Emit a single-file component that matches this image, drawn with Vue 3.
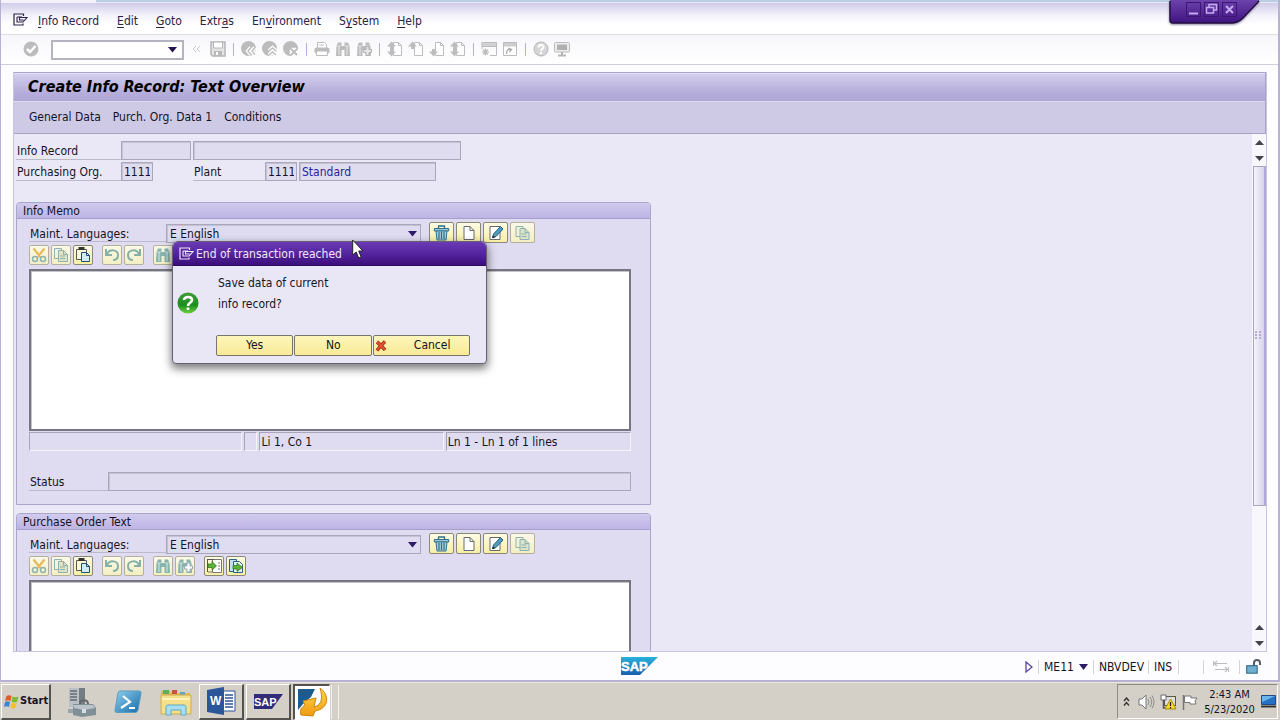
<script setup>
import { ref } from 'vue'

const menus = [
  ['', 'I', 'nfo Record'],
  ['', 'E', 'dit'],
  ['', 'G', 'oto'],
  ['Extr', 'a', 's'],
  ['En', 'v', 'ironment'],
  ['S', 'y', 'stem'],
  ['', 'H', 'elp']
]

const page = '<path d="M6.500 1.500h5l3 3v10h-8z" fill="#fff" stroke="#bdbdbd"/><path d="M11.500 1.500v3h3" fill="none" stroke="#bdbdbd"/>'
const up = '<path d="M4.500 .5 9 5.500H6V8H3V5.500H0z" fill="#bdbdbd"/>'
const down = '<path d="M4.500 15.500 0 10.500h3V8h3v2.500h3z" fill="#bdbdbd"/>'
const disc = '<circle cx="7.500" cy="7.500" r="7.500" fill="#bcbcbc"/>'
const bino = (c) => `<path d="M1.500 5 3 1.500h3.500V5h3V1.500H13L14.500 5l.5 10H9.500V9h-3v6H1z" fill="${c}"/><path d="M4 5v9M12 5v9" stroke="#fff" stroke-opacity=".7"/><path d="M2 5h4M10 5h4" stroke="#fff" stroke-opacity=".5"/>`

const toolGroups = [
  [
    { label: 'Back', art: disc + '<path d="M10 6.500 7 10l3 3.500M14 6.500 11 10l3 3.500" fill="none" stroke="#fff" stroke-width="4"/><path d="M10 6.500 7 10l3 3.500M14 6.500 11 10l3 3.500" fill="none" stroke="#bcbcbc" stroke-width="1.400"/>' },
    { label: 'Exit', art: disc + '<path d="m7 10 3.500-3 3.500 3M7 14l3.500-3 3.500 3" fill="none" stroke="#fff" stroke-width="4"/><path d="m7 10 3.500-3 3.500 3M7 14l3.500-3 3.500 3" fill="none" stroke="#bcbcbc" stroke-width="1.400"/>' },
    { label: 'Cancel', art: disc + '<path d="m8 8 6 6M14 8l-6 6" stroke="#fff" stroke-width="5"/><path d="m8 8 6 6M14 8l-6 6" stroke="#bcbcbc" stroke-width="2"/>' }
  ],
  [
    { label: 'Print', art: '<path d="M3.500 7V1.500h7l2 2V7" fill="#fff" stroke="#bcbcbc"/><path d="M5 4h5" stroke="#bcbcbc"/><rect x=".5" y="6.500" width="15" height="6" rx="2" fill="#bcbcbc"/><path d="M2.500 10h11v4.500h-11z" fill="#fff" stroke="#bcbcbc"/>' },
    { label: 'Find', art: bino('#bcbcbc') },
    { label: 'Find next', art: bino('#bcbcbc') + '<path d="M10 5.500h3v3h2.500v3H13v3h-3v-3H7.500v-3H10z" fill="#e6e6e6" stroke="#b0b0b0"/>' }
  ],
  [
    { label: 'First page', art: page + up + down },
    { label: 'Previous page', art: page + up },
    { label: 'Next page', art: page + down },
    { label: 'Last page', art: page + up + down }
  ],
  [
    { label: 'New session', art: '<rect x="1" y="1.500" width="14.500" height="4" fill="#d2d2d2" stroke="#bcbcbc"/><path d="M15.500 5.500v9H9M1 5.500V8" fill="none" stroke="#bcbcbc"/><path d="M4.500 7.500v7M1 11h7M2 8.500l5 5M7 8.500l-5 5" stroke="#bcbcbc" stroke-width="1.200"/>' },
    { label: 'Create shortcut', art: '<path d="M1.500 1.500h13v13h-13z" fill="#fff" stroke="#bcbcbc"/><path d="M2 2h12v3.500H2z" fill="#cdcdcd"/><path d="M4.500 13c0-3 1-5 4-4.500M6.500 7l3 1.500-2 2.500" fill="none" stroke="#aaa" stroke-width="1.300"/>' }
  ],
  [
    { label: 'Help', art: '<circle cx="8" cy="8" r="7" fill="#d6d6d6" stroke="#b5b5b5"/><path d="M5.500 6.500C5.500 3 10.500 3.500 10.500 6c0 2-2.500 1.800-2.500 4M8 11v2" fill="none" stroke="#fff" stroke-width="2"/>' },
    { label: 'Customize layout', art: '<rect x=".5" y="1.500" width="15" height="9.500" rx="1" fill="#ededed" stroke="#bcbcbc"/><path d="M3 3.500h10v5.500H3z" fill="#b0b0b0"/><path d="M8 11v3M4 14.500h8" stroke="#b5b5b5" stroke-width="2"/>' }
  ]
]

const sheet = '<path d="M3.500 1.500h6l4 4v9h-10z" fill="#fff" stroke="#666a70"/><path d="M9.500 1.500v4h4" fill="none" stroke="#666a70"/>'
const copyArt = '<path d="M1.500 1.500h7v10h-7z" fill="#f5f3d6" stroke="#8fb0b0"/><path d="M5.500 3.500h5l4 4v7h-9z" fill="#d9e4c8" stroke="#8fb0b0"/><path d="M10.500 3.500v4h4M7 9h5M7 11.500h5" fill="none" stroke="#8fb0b0"/>'
const languageTools = [
  { label: 'Delete', art: '<path d="M5 3.500V1h6v2.500" fill="none" stroke="#2e6f8c" stroke-width="1.300"/><path d="M.8 3.500h14.400v2.500H.8z" fill="#9ccada" stroke="#2e6f8c"/><path d="M2.500 6h11l-1 9h-9z" fill="#a5d0dd" stroke="#2e6f8c"/><path d="M5.500 7v7M8 7v7M10.500 7v7" stroke="#2e6f8c" stroke-width="1.200"/>' },
  { label: 'Create', art: sheet },
  { label: 'Change', art: '<path d="M2.500 1.500h10v13h-10z" fill="#fff" stroke="#666a70"/><path d="M5 12.500l1-3.500 7-7.500 2.500 2.500-7 7.500z" fill="#4f9cc0" stroke="#235c78"/><path d="m5 12.500 2-.7" stroke="#222" stroke-width="1.500"/>' },
  { label: 'Copy', art: copyArt, off: true }
]
const editorTools = [
  [
    { label: 'Cut', off: true, art: '<path d="M2.500 1.500 9.500 10M13.500 1.500 6.500 10" stroke="#e8b85a" stroke-width="2.200"/><circle cx="4" cy="12" r="2.500" fill="none" stroke="#8fb3b0" stroke-width="1.500"/><circle cx="12" cy="12" r="2.500" fill="none" stroke="#8fb3b0" stroke-width="1.500"/>' },
    { label: 'Copy', off: true, art: copyArt },
    { label: 'Paste', art: '<path d="M1.500 2.500h10v10h-10z" fill="#f8f6df" stroke="#5a5a4c"/><path d="M3.500 0h6v3h-6z" fill="#333"/><path d="M6.500 5.500h5l3 3v6h-8z" fill="#d4ecf5" stroke="#205070"/><path d="M11.500 5.500v3h3" fill="none" stroke="#205070"/>' }
  ],
  [
    { label: 'Undo', off: true, art: '<path d="M2 2v6h6M3 7c3-6 11-4 11 1 0 3-2 5-5 5" fill="none" stroke="#87b0a9" stroke-width="2"/>' },
    { label: 'Redo', off: true, art: '<path d="M14 2v6H8M13 7C10 1 2 3 2 8c0 3 2 5 5 5" fill="none" stroke="#87b0a9" stroke-width="2"/>' }
  ],
  [
    { label: 'Find', off: true, art: bino('#86b4ae') },
    { label: 'Find next', off: true, art: bino('#86b4ae') + '<path d="M10 5h3v3h2.500v3H13v3h-3v-3H7.500V8H10z" fill="#fff" stroke="#9ab"/>' }
  ],
  [
    { label: 'Load text', art: '<path d="M6.500 1.500h9v13h-9z" fill="#fff" stroke="#777"/><path d="M1 1.500h7M1.500 1v13" stroke="#555"/><path d="M2 6h4V3.500L10.500 8 6 12v-2.500H2z" fill="#5bb437" stroke="#2c6f1d" stroke-width=".7"/><path d="M12 5h2M12 8h2M12 11h2M2 14h4" stroke="#777"/>' },
    { label: 'Save text', art: '<path d="M1.500 1.500h7v12h-7z" fill="#c3e2ee" stroke="#2a617e"/><path d="M5.500 3.500h6l3 3v8h-9z" fill="#e5f4fa" stroke="#2a617e"/><path d="M5 7.500h4V5l5.500 4.500L9 13.500V11H5z" fill="#5bb437" stroke="#2c6f1d" stroke-width=".7"/>' }
  ]
]

const command = ref('')
const groups = [
  { id: 'memo', title: 'Info Memo', status: true },
  { id: 'po', title: 'Purchase Order Text', status: false }
]
const exitArt = '<path d="M10.500 3V1H1v11h9v-1.500" fill="none" stroke="currentColor" stroke-width="1.200"/><path d="M4 4h5M4 4v5h6l4-4.500H6.500V7h4" fill="none" stroke="currentColor" stroke-width="1.100"/>'
</script>

<template>
  <div class="screen">
    <div class="window">
      <div class="edge"><span></span></div>
      <svg class="controls" width="92" height="26" viewBox="0 0 92 26" aria-hidden="true">
        <defs>
          <linearGradient id="purple" x1="0" y1="0" x2="0" y2="1">
            <stop offset="0" stop-color="#6c42ad" /><stop offset="1" stop-color="#401480" />
          </linearGradient>
        </defs>
        <path d="M1 0v20q0 3 3 3h58q7 0 12-5L90 1V0z" fill="url(#purple)" />
        <path d="M1 1v19q0 3 3 3h58q7 0 12-5L90 1" fill="none" stroke="#241040" stroke-width="1.500" />
        <g fill="none" stroke="#3d1673">
          <rect x="17.500" y="2.500" width="14" height="14" /><rect x="35.500" y="2.500" width="14" height="14" /><rect x="53.500" y="2.500" width="14" height="14" />
        </g>
        <g fill="none" stroke="#c5a9ef" stroke-width="1.500">
          <path d="M20 13.500h9" stroke-width="2" /><path d="M40 7V4.500h7.500V10H45" /><path d="M37.500 7.500h7v5.500h-7z" /><path d="m57 6 7 7M64 6l-7 7" stroke-width="2" />
        </g>
      </svg>

      <nav class="menubar">
        <button class="plain session" aria-label="Session menu"><svg width="15" height="13" viewBox="0 0 15 13" v-html="exitArt"></svg></button>
        <button v-for="m in menus" :key="m.join('')" class="plain">{{ m[0] }}<u>{{ m[1] }}</u>{{ m[2] }}</button>
      </nav>

      <div class="toolbar">
        <button class="plain enter" aria-label="Enter">
          <svg width="16" height="16" viewBox="0 0 16 16"><circle cx="8" cy="8" r="7.500" fill="#bcbcbc" /><path d="m4 8 3 3 5.500-6" fill="none" stroke="#fff" stroke-width="2.500" /></svg>
        </button>
        <div class="command">
          <input v-model="command" type="text" aria-label="Command field">
          <svg width="9" height="6" viewBox="0 0 9 6"><path d="M0 0h9L4.500 5.500z" fill="#24144f" /></svg>
        </div>
        <button class="plain collapse" aria-label="Hide command field">
          <svg width="9" height="8" viewBox="0 0 9 8"><path d="M4 1 1 4l3 3M8 1 5 4l3 3" fill="none" stroke="#c9c9c9" /></svg>
        </button>
        <button class="plain" aria-label="Save">
          <svg width="16" height="16" viewBox="0 0 16 16"><path d="M1 1h14v14H2.500L1 13.500z" fill="#e4e4e4" stroke="#b5b5b5" stroke-width="1.500" /><path d="M3.500 1h9v6h-9z" fill="#fff" stroke="#b5b5b5" /><path d="M4 10h8v5H4z" fill="#b9b9b9" /><path d="M6 11h2v3H6z" fill="#fff" /></svg>
        </button>
        <div v-for="(g, i) in toolGroups" :key="i" class="tools">
          <button v-for="t in g" :key="t.label" class="plain" :aria-label="t.label"><svg width="16" height="16" viewBox="0 0 16 16" v-html="t.art"></svg></button>
        </div>
      </div>

      <main class="content">
        <header class="heading">
          <h1>Create Info Record: Text Overview</h1>
          <div class="actions">
            <button class="plain">General Data</button>
            <button class="plain">Purch. Org. Data 1</button>
            <button class="plain">Conditions</button>
          </div>
        </header>

        <div class="body">
          <div class="form">
            <div class="row">
              <label class="lab main-lab" for="rec">Info Record</label>
              <input id="rec" class="field w70" readonly>
              <input class="field w268" readonly aria-label="Info record description">
            </div>
            <div class="row">
              <label class="lab main-lab" for="org">Purchasing Org.</label>
              <input id="org" class="field w32" readonly value="1111">
              <label class="lab plant" for="plant">Plant</label>
              <input id="plant" class="field w32" readonly value="1111">
              <input class="field w137" readonly value="Standard" aria-label="Info category">
            </div>

            <section v-for="g in groups" :key="g.id" class="group">
              <h2>{{ g.title }}</h2>
              <div class="inner">
                <div class="langrow">
                  <label class="lab lang-lab" :for="g.id + '-lang'">Maint. Languages:</label>
                  <div class="select">
                    <select :id="g.id + '-lang'"><option>E English</option></select>
                    <svg width="9" height="6" viewBox="0 0 9 6"><path d="M0 0h9L4.500 5.500z" fill="#2c1a66" /></svg>
                  </div>
                  <div class="langtools">
                    <button v-for="t in languageTools" :key="t.label" class="key wide" :class="{ off: t.off }" :aria-label="t.label"><svg width="17" height="16" viewBox="0 0 16 16" v-html="t.art"></svg></button>
                  </div>
                </div>
                <div class="editbar">
                  <div v-for="(set, i) in editorTools" :key="i" class="set">
                    <button v-for="t in set" :key="t.label" class="key" :class="{ off: t.off }" :aria-label="t.label"><svg width="16" height="16" viewBox="0 0 16 16" v-html="t.art"></svg></button>
                  </div>
                </div>
                <textarea class="editor" :aria-label="g.title"></textarea>
                <template v-if="g.status">
                  <div class="info">
                    <span class="c1"></span><span class="c2"></span><span class="c3">Li 1, Co 1</span><span class="c4">Ln 1 - Ln 1 of 1 lines</span>
                  </div>
                  <div class="statusrow">
                    <label class="lab status-lab" :for="g.id + '-status'">Status</label>
                    <input :id="g.id + '-status'" class="field grow" readonly>
                  </div>
                </template>
              </div>
            </section>
          </div>

          <div class="scroll">
            <button class="plain arrow" aria-label="Scroll up"><svg width="9" height="5" viewBox="0 0 9 5"><path d="M0 5h9L4.500 0z" fill="#45414f" /></svg></button>
            <button class="plain arrow" aria-label="Scroll down"><svg width="9" height="5" viewBox="0 0 9 5"><path d="M0 0h9L4.500 5z" fill="#45414f" /></svg></button>
            <div class="track"><div class="thumb"><svg width="8" height="9" viewBox="0 0 8 9"><path d="M0 0h2v2H0zM4 0h2v2H4zM0 3h2v2H0zM4 3h2v2H4zM0 6h2v2H0zM4 6h2v2H4z" fill="#b4acd2" /></svg></div></div>
            <button class="plain arrow" aria-label="Scroll up"><svg width="9" height="5" viewBox="0 0 9 5"><path d="M0 5h9L4.500 0z" fill="#45414f" /></svg></button>
            <button class="plain arrow" aria-label="Scroll down"><svg width="9" height="5" viewBox="0 0 9 5"><path d="M0 0h9L4.500 5z" fill="#45414f" /></svg></button>
          </div>
        </div>
      </main>

      <footer class="statusbar">
        <svg class="brand" width="37" height="18" viewBox="0 0 37 18" role="img" aria-label="SAP">
          <defs><linearGradient id="sapblue" x1="0" y1="0" x2="0" y2="1"><stop offset="0" stop-color="#28b1dc" /><stop offset="1" stop-color="#1a5fb0" /></linearGradient></defs>
          <path d="M0 0h37L19 18H0z" fill="url(#sapblue)" /><text x="0" y="14" font-family="Liberation Sans, sans-serif" font-size="13" font-weight="700" fill="#fff" stroke="#fff" stroke-width=".5">SAP</text>
        </svg>
        <div class="cells">
          <button class="plain play" aria-label="Expand"><svg width="8" height="12" viewBox="0 0 8 12"><path d="M1 1v10l6-5z" fill="#fff" stroke="#5a45a5" stroke-width="1.300" /></svg></button>
          <button class="plain cell tcode">ME11<svg width="9" height="6" viewBox="0 0 9 6"><path d="M0 0h9L4.500 6z" fill="#2c1a66" /></svg></button>
          <span class="cell sys">NBVDEV</span>
          <span class="cell ins">INS</span>
          <span class="cell blank"></span>
          <span class="cell flow"><svg width="16" height="13" viewBox="0 0 16 13"><path d="M.5 1v5M1 3.500h13M4 1 1.500 3.500 4 6M15.500 7v5M15 9.500H2M12 7l2.500 2.500L12 12" fill="none" stroke="#bdbdbd" stroke-width="1.200" /></svg></span>
          <span class="cell lock"><svg width="15" height="15" viewBox="0 0 15 15"><path d="M8 7V4c0-4 6-4 6 0v2" fill="none" stroke="#555d66" stroke-width="2" /><rect x=".7" y="6.700" width="10.500" height="7.500" fill="#6fb0d0" stroke="#2d607c" /></svg></span>
        </div>
      </footer>

      <div class="dialog" role="dialog" aria-labelledby="dlg-title">
        <div class="dlg-title"><svg width="15" height="13" viewBox="0 0 15 13" v-html="exitArt"></svg><span id="dlg-title">End of transaction reached</span></div>
        <div class="dlg-body">
          <svg width="22" height="22" viewBox="0 0 22 22" aria-hidden="true">
            <defs><linearGradient id="green" x1="0" y1="0" x2="0" y2="1"><stop offset="0" stop-color="#3f9c3a" /><stop offset=".6" stop-color="#1c8f20" /><stop offset="1" stop-color="#6fd044" /></linearGradient></defs>
            <circle cx="11" cy="11" r="10.500" fill="url(#green)" /><path d="M7 8c0-4 8-4 8 0 0 3-4 2.500-4 6M11 15.500V18" fill="none" stroke="#fff" stroke-width="2.600" />
          </svg>
          <p>Save data of current<br>info record?</p>
        </div>
        <div class="dlg-buttons">
          <button class="yellow">Yes</button><button class="yellow no">No</button>
          <button class="yellow cancel"><svg width="12" height="12" viewBox="0 0 12 12"><path d="M2 2q4 3 8 8M10 1.500Q6 5 2 10.500" fill="none" stroke="#8f2418" stroke-width="3.600" /><path d="M2 2q4 3 8 8M10 1.500Q6 5 2 10.500" fill="none" stroke="#e0512f" stroke-width="2.200" /></svg><span>Cancel</span></button>
        </div>
      </div>
    </div>

    <div class="taskbar">
      <button class="start">
        <svg width="15" height="15" viewBox="0 0 15 15"><path d="M2.500 2Q5 .5 7.500 2L6.500 7Q4 5.500 1 7z" fill="#e8562a" /><path d="M8.500 2.500q3 1.500 6 0L13 8q-3 1-5.500-.5z" fill="#7fb93a" /><path d="M1 8q2.500-1.500 5 0l-1 5Q2.500 11.500 0 13z" fill="#3f83d4" /><path d="M7.500 8.500q3 1.500 5.500.5l-1.500 5q-2.500 1-5-.5z" fill="#f6c02c" /></svg>Start
      </button>
      <div class="pins">
        <button class="plain pin" aria-label="Server Manager"><svg width="28" height="30" viewBox="0 0 28 30"><path d="M1 1h10v19H1z" fill="#b9c1c4" /><path d="M2 4h7M2 7h7M2 10h7M2 13h7" stroke="#626b70" stroke-width="1.500" /><path d="M11 1h6v19h-6z" fill="#737d83" /><path d="M5 17h20l3 4v7l-14 2-9-2z" fill="#818f97" /><path d="M5 18h20l2 3-11 2-10-2z" fill="#bac4ca" /><path d="M12 17c0-5 8-5 8 0" fill="none" stroke="#5e686d" stroke-width="2" /><path d="M14 22h4v4h-4z" fill="#d7dee1" /><path d="M0 22h5v4H0z" fill="#9aa5aa" /></svg></button>
        <button class="plain pin" aria-label="PowerShell"><svg width="28" height="24" viewBox="0 0 28 24"><defs><linearGradient id="ps" x1="0" y1="0" x2="1" y2="1"><stop offset="0" stop-color="#8bd0ee" /><stop offset="1" stop-color="#1769a8" /></linearGradient></defs><path d="M6 1h19q2.500 0 2 2.500L24 20q-.5 2.500-3 2.500H3Q.5 22.500 1 20L4 3q.5-2 2-2z" fill="url(#ps)" stroke="#5a9dc2" /><path d="m9 6 7 6-9 6M15 18h6" fill="none" stroke="#fff" stroke-width="2.200" /></svg></button>
        <button class="plain pin" aria-label="Explorer"><svg width="32" height="28" viewBox="0 0 32 28"><path d="M1 3h9l2 2h18v21H1z" fill="#ddb853" /><path d="M3 2h6v4H3z" fill="#5fae62" /><path d="M12 2h5v4h-5z" fill="#c6553c" /><path d="M20 4h5v3h-5z" fill="#5aa7c6" /><path d="M1 7h30v19H1z" fill="#f4df8b" stroke="#ceac4e" /><path d="M2 11h28" stroke="#fff2bb" stroke-width="2" /><path d="M6 27V19q0-2 2-2h16q2 0 2 2v8h-5v-5H11v5z" fill="#a8def1" stroke="#5fa9ca" /></svg></button>
      </div>
      <button class="task" aria-label="Word"><svg width="29" height="28" viewBox="0 0 29 28"><path d="M14 4h14v20H14z" fill="#fff" stroke="#2b569a" /><path d="M18 8h8M18 11h8M18 14h8M18 17h8M18 20h8" stroke="#2b569a" stroke-width="1.300" /><path d="M0 3 17 0v28L0 25z" fill="#2b569a" /><text x="3" y="18" font-family="Liberation Sans, sans-serif" font-size="12" font-weight="700" fill="#fff">W</text></svg></button>
      <button class="task" aria-label="SAP Logon"><svg width="29" height="15" viewBox="0 0 29 15"><path d="M0 0h29L18 15H0z" fill="#302c79" /><text x="0" y="12" font-family="Liberation Sans, sans-serif" font-size="11" font-weight="700" fill="#fff">SAP</text></svg></button>
      <button class="task active" aria-label="SAP GUI"><svg width="31" height="29" viewBox="0 0 31 29"><defs><linearGradient id="gold" x1="0" y1="0" x2="0" y2="1"><stop offset="0" stop-color="#ffd84a" /><stop offset="1" stop-color="#f09a10" /></linearGradient></defs><path d="M1 1h17l-4 8-8 7-5 6z" fill="#1c5b8f" /><path d="M23 0c10 7 9 21-5 23l-2 5L4 27c-2-5 1-8 4-10l-2-4 13-3-2 9c8-2 9-9 6-19z" fill="url(#gold)" stroke="#c98512" /></svg></button>
      <span class="stack"></span>
      <div class="tray">
        <button class="plain" aria-label="Show hidden icons"><svg width="7" height="10" viewBox="0 0 7 10"><path d="m1 4 2.500-3L6 4M1 8.500 3.500 5.500 6 8.500" fill="none" stroke="#333" stroke-width="1.400" /></svg></button>
        <svg width="17" height="16" viewBox="0 0 17 16"><path d="M1 5h3l4-4v14l-4-4H1z" fill="#fff" stroke="#777" /><path d="M10 5q2 3 0 6M12 3q3.500 5 0 10M14 1.500q4 6.500 0 13" fill="none" stroke="#8c8c8c" /></svg>
        <svg width="17" height="16" viewBox="0 0 17 16"><rect x="4.500" y="2.500" width="11" height="9" fill="#ddd" stroke="#555" /><path d="M1 1h5v5H1z" fill="#fff" stroke="#666" /><path d="M3.500 6v8h5" fill="none" stroke="#555" stroke-width="1.500" /><path d="m10.500 5 5.500 10H5z" fill="#f8dc26" stroke="#a98f0b" /><path d="M10.500 8v4M10.500 13v1.500" stroke="#222" stroke-width="1.300" /></svg>
        <svg width="16" height="16" viewBox="0 0 16 16"><path d="M1.500 1v15" stroke="#777" stroke-width="1.500" /><path d="M2.500 2H9v2h6l-2 3 1 3H8V8.500H2.500z" fill="#fff" stroke="#777" /></svg>
        <div class="clock">2:43 AM<br>5/23/2020</div>
        <svg width="15" height="13" viewBox="0 0 15 13"><path d="M.5.500h14v9H.5z" fill="#2571c4" stroke="#234b7d" /><path d="M1 1h13L1 7z" fill="#6bb5ec" /><path d="M0 11.500h15" stroke="#333" stroke-width="2" /></svg>
      </div>
    </div>

    <svg class="pointer" width="12" height="20" viewBox="0 0 12 20" aria-hidden="true"><path d="M.7 1v15l3.500-3 2.500 6 2.500-1-2.500-6H11z" fill="#fff" stroke="#222" /></svg>
  </div>
</template>

<style>
html, body { margin: 0; }
</style>

<style scoped>
.screen, .screen * { box-sizing: border-box; }
.screen { position: relative; display: flex; flex-direction: column; height: 100vh; overflow: hidden; background: #d4d0c8; color: #15131f; font: 12px/16px "DejaVu Sans Condensed", "Noto Sans", sans-serif; }
svg { display: block; flex: none; }
button, input, select, textarea { font: inherit; color: inherit; margin: 0; border-radius: 0; }
.plain { display: block; flex: none; padding: 0; border: 0; background: none; white-space: nowrap; }
.window { flex: 1; min-height: 0; display: flex; flex-direction: column; background: #fdfdff; border: solid #b7b2d3; border-width: 0 2px 2px 1px; }
.edge { height: 3px; background: #b9cee3; border-bottom: 1px solid #e6e9f5; flex: none; }
.edge span { display: block; width: 95px; height: 3px; background: #f4f1fb; }
.controls { position: absolute; right: 19px; top: 0; filter: drop-shadow(0 1px 1px #8882a0); }
.menubar { flex: none; display: flex; align-items: center; gap: 18px; height: 32px; padding: 5px 0 0 12px; border-bottom: 1px solid #dfdee8; background: linear-gradient(#d0cce9, #f4f2fb 40%, #fff 70%); color: #2c2348; }
.menubar u { text-underline-offset: 2px; }
.session { margin-right: -8px; padding-bottom: 4px; }
.toolbar { flex: none; display: flex; align-items: center; height: 30px; padding: 0 0 2px 22px; border-bottom: 1px solid #d0cede; background: linear-gradient(#f7f6fb, #fff); }
.command { position: relative; width: 133px; height: 20px; margin: 2px 0 0 12px; border: 2px solid #b5b3bd; background: #fff; }
.command input { display: block; width: 100%; height: 16px; border: 0; padding: 0 18px 0 3px; background: transparent; outline: 0; }
.command svg { position: absolute; right: 5px; top: 5px; }
.collapse { margin: 0 9px 0 8px; }
.tools { display: flex; gap: 5px; }
.tools::before { content: ""; width: 1px; height: 13px; margin: 2px 2px 0 7px; background: #b6addc; }
.content { flex: 1; min-height: 0; display: flex; flex-direction: column; margin: 7px 11px 0 12px; border: solid #c9c5e0; border-width: 0 1px 1px; background: #eae8f6; }
.heading { flex: none; border: 1px solid #a9a5c4; border-width: 1px 1px 1px 0; background: #cecae6; }
h1 { margin: 0; padding: 0 14px; height: 28px; font-size: 16px; line-height: 25px; font-weight: 700; font-style: italic; background: linear-gradient(#d2cdec, #b5addb 70%, #aea5d6); border-top: 1px solid #e3e0f3; color: #000; }
.actions { display: flex; gap: 12px; align-items: center; height: 32px; padding: 0 15px 2px; border-top: 1px solid #dedbef; }
.body { flex: 1; min-height: 0; display: flex; }
.form { flex: 1; min-width: 0; overflow: hidden; padding: 7px 0 0 2px; }
.row { display: flex; height: 19px; margin-bottom: 2px; gap: 2px; }
.lab { border-bottom: 1px solid #bcb9cc; padding: 2px 0 0 1px; line-height: 16px; white-space: nowrap; height: 19px; flex: none; }
.main-lab { width: 105px; margin-right: -2px; }
.field { display: block; flex: none; height: 19px; padding: 0 2px; border: 1px solid #aaa7ba; background: #dfdcf0; box-shadow: inset 1px 1px 0 #c5c2d3; outline: 0; line-height: 16px; }
.w70 { width: 70px; } .w268 { width: 268px; } .w32 { width: 32px; } .w137 { width: 137px; color: #2a1fa0; }
.plant { width: 72px; margin: 0 -2px 0 38px; }
.group { width: 635px; margin-bottom: 8px; border: 1px solid #aaa5cb; border-radius: 4px 4px 0 0; background: #dfdbf1; overflow: hidden; }
.row + .group { margin-top: 21px; }
h2 { margin: 0; height: 16px; padding-left: 6px; font-size: 12px; line-height: 16px; font-weight: 400; background: linear-gradient(#d1cbee, #bdb4e4); border-bottom: 1px solid #a6a0ce; }
.inner { padding: 3px 19px 13px 12px; }
.langrow { display: flex; height: 23px; }
.lang-lab { width: 137px; height: 20px; padding-top: 4px; }
.select { position: relative; width: 255px; height: 19px; margin-top: 2px; border: 1px solid #aaa7ba; box-shadow: inset 1px 1px 0 #c5c2d3; }
.select select { display: block; appearance: none; width: 100%; height: 17px; border: 0; padding: 0 0 0 3px; background: transparent; outline: 0; line-height: 16px; }
.select svg { position: absolute; right: 3px; top: 6px; pointer-events: none; }
.langtools { display: flex; gap: 2px; margin-left: 8px; }
.key { display: flex; align-items: center; justify-content: center; flex: none; width: 20px; height: 20px; padding: 0; border: 1px solid #8c8877; border-radius: 2px; background: linear-gradient(#fdfbe4, #f8efa5); }
.wide { width: 25px; height: 21px; }
.off { border-color: #b5b09c; background: linear-gradient(#fbf9e8, #f3efc3); }
.editbar { display: flex; gap: 9px; height: 24px; }
.set { display: flex; gap: 2px; }
.editor { display: block; width: 100%; height: 162px; padding: 2px; resize: none; border: 2px solid #77757f; outline: 0; background: #fff; box-shadow: inset 1px 1px 0 #c5c4ca; }
.info { display: flex; gap: 2px; height: 19px; margin-top: 1px; line-height: 18px; }
.info span { border: 1px solid #a8a5b7; border-color: #a8a5b7 #f6f5fb #f6f5fb #a8a5b7; padding-left: 1px; white-space: nowrap; }
.c1 { flex: 214; } .c2 { flex: 11; } .c3 { flex: 185; } .c4 { flex: 186; }
.statusrow { display: flex; margin-top: 21px; }
.status-lab { width: 79px; }
.grow { flex: 1; min-width: 0; }
.scroll { flex: none; width: 14px; display: flex; flex-direction: column; align-items: center; background: #f8f7fc; }
.arrow { width: 13px; height: 16px; display: flex; align-items: center; justify-content: center; }
.track { flex: 1; width: 13px; }
.thumb { display: flex; align-items: center; justify-content: center; height: 75%; border: 1px solid #aaa6b8; border-right: 2px solid #b0a8d6; background: linear-gradient(90deg, #f5f3fb, #d8d3ec); }
.statusbar { position: relative; flex: none; display: flex; justify-content: flex-end; align-items: center; height: 28px; }
.brand { position: absolute; left: calc(50% - 19px); top: 5px; }
.cells { display: flex; align-items: center; height: 17px; padding: 1px 17px 0 0; }
.play { margin-right: 5px; }
.cell { display: flex; align-items: center; height: 14px; border-left: 1px solid #d5d3dc; padding-left: 5px; line-height: 14px; }
.tcode { gap: 5px; width: 55px; } .sys { width: 55px; } .ins { width: 30px; } .blank { width: 25px; } .flow { width: 36px; padding-left: 9px; } .lock { padding-left: 6px; }
.dialog { position: absolute; left: 172px; top: 241px; width: 315px; border: 1px solid #676074; border-radius: 6px 6px 4px 4px; background: #e9e7f5; box-shadow: 0 4px 8px 1px rgba(0, 0, 0, .5); overflow: hidden; }
.dlg-title { display: flex; align-items: center; gap: 2px; height: 24px; padding: 0 6px; color: #eee8fb; background: linear-gradient(#6a3bb4, #55249f 50%, #3b0f79); border-bottom: 1px solid #2d0c60; }
.dlg-body { display: flex; align-items: center; gap: 19px; height: 69px; padding-left: 4px; }
.dlg-body svg { margin-top: 4px; }
.dlg-body p { margin: 0; line-height: 21px; padding-bottom: 14px; }
.dlg-buttons { display: flex; gap: 1px; padding: 0 16px 7px 43px; }
.yellow { flex: 77; height: 21px; padding: 0; border: 1px solid #77756c; border-radius: 2px; line-height: 19px; background: linear-gradient(#fdf6bb, #f9ea96); }
.no { flex: 78; }
.cancel { flex: 97; display: flex; align-items: center; }
.cancel svg { margin-left: 1px; }
.cancel span { flex: 1; padding-left: 8px; text-align: center; }
.taskbar { flex: none; display: flex; align-items: center; height: 38px; border-top: 1px solid #ebe8e0; padding: 0 2px 0 1px; background: #d4d0c8; }
.start { display: flex; align-items: center; gap: 1px; width: 50px; height: 36px; padding: 0 0 0 2px; font: 700 11px/16px "DejaVu Sans Condensed", sans-serif; background: #d4d0c8; border: solid; border-width: 1px 2px 2px 1px; border-color: #fff #55534f #55534f #fff; }
.pins { display: flex; align-items: center; gap: 18px; margin-left: 17px; width: 131px; }
.task { display: flex; align-items: center; justify-content: center; flex: none; width: 45px; height: 36px; margin-right: 2px; padding: 0; background: #d4d0c8; border: solid; border-width: 1px 2px 2px 1px; border-color: #fff #55534f #55534f #fff; }
.active { width: 37px; margin: 0; border-width: 2px 1px 1px 2px; border-color: #55534f #fff #fff #55534f; background: #fff; }
.stack { width: 8px; height: 34px; border: solid #f4f2ee; border-width: 0 1px; margin-left: 1px; }
.tray { display: flex; align-items: center; gap: 5px; margin-left: auto; width: 161px; height: 35px; padding: 0 1px 0 5px; border: 1px solid; border-color: #8e8b84 #fff #fff #8e8b84; }
.tray button { margin-right: 3px; }
.clock { flex: 1; min-width: 0; text-align: center; line-height: 15px; font-size: 11px; white-space: nowrap; }
.pointer { position: absolute; left: 352px; top: 239px; }
</style>
